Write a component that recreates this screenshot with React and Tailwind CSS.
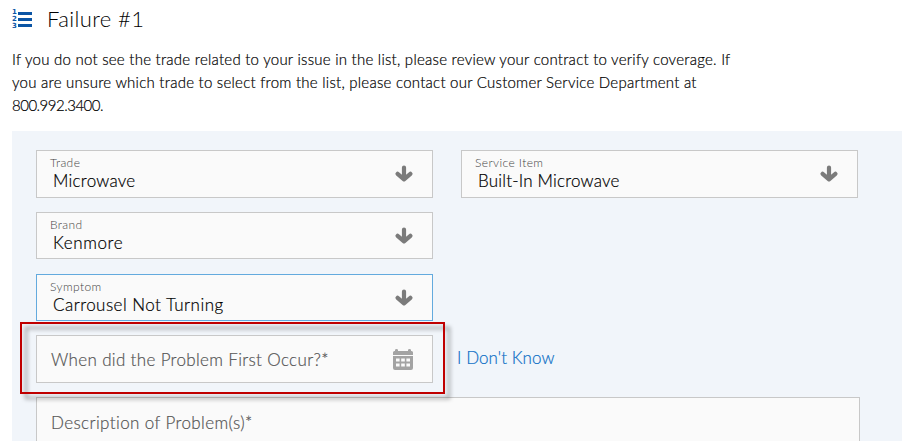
function DownArrow() {
  return (
    <svg width="18" height="18" viewBox="0 0 18 18" className="shrink-0" fill="none" stroke="#7b7b7b" strokeWidth="4.2" strokeLinecap="round" strokeLinejoin="round">
      <path d="M9 2.5v10M2.6 8.8 9 14.4l6.4-5.6" />
    </svg>
  );
}

function CalendarIcon() {
  return (
    <svg width="20" height="21" viewBox="0 0 20 21" className="shrink-0">
      <path fill="#a3a3a3" d="M0 3.5Q0 2 1.5 2H2V1.3Q2 0 3.5 0T5 1.3V2H15V1.3Q15 0 16.5 0T18 1.3V2h.5Q20 2 20 3.5V6H0zM0 7h20v12q0 2-2 2H2q-2 0-2-2z" />
      <path fill="#fafafa" d="M3 9.5h3.6v3H3zM8.2 9.5h3.6v3H8.2zM13.4 9.5h3.6v3h-3.6zM3 14.5h3.6v3H3zM8.2 14.5h3.6v3H8.2zM13.4 14.5h3.6v3h-3.6z" />
    </svg>
  );
}

function NumberedListIcon() {
  return (
    <div className="flex h-[21px] w-[20px] shrink-0 justify-between font-['DejaVu_Sans',sans-serif] text-[7px] leading-[7px] font-bold text-[#0b55a5]">
      <div className="flex flex-col">
        <span>1</span>
        <span>2</span>
        <span>3</span>
      </div>
      <div className="flex w-[14px] flex-col gap-[3px] pt-[3px]">
        <i className="h-[3px] bg-[#0b55a5]" />
        <i className="h-[3px] bg-[#0b55a5]" />
        <i className="h-[3px] bg-[#0b55a5]" />
      </div>
    </div>
  );
}

function SelectField({ label, value, tracking, className }) {
  return (
    <div className={`flex w-[397px] items-center justify-between border bg-[#fafafa] pl-[13px] pr-[19px] ${className}`}>
      <div className="flex h-full flex-col pt-[4px]">
        <span className="text-[12px] leading-[15px] tracking-[0.4px] text-[#444]">{label}</span>
        <span className={`pt-px pl-[3px] text-[17px] leading-[20px] text-black [-webkit-text-stroke:0.2px_#000] ${tracking}`}>{value}</span>
      </div>
      <DownArrow />
    </div>
  );
}

export default function App() {
  return (
    <div className="h-[441px] w-[902px] overflow-hidden bg-white pl-[12px] font-[Lato,'Open_Sans',sans-serif] font-light whitespace-nowrap">
      <header className="flex h-[38px] items-center gap-[15px]">
        <NumberedListIcon />
        <h1 className="text-[22px] leading-[30px] font-light tracking-[0.4px] text-black">Failure #1</h1>
      </header>
      <p className="flex h-[93px] flex-col items-start pt-[10px] text-[15px] leading-[23px] text-black [-webkit-text-stroke:0.2px_#000]">
        <span className="tracking-[0.25px]">If you do not see the trade related to your issue in the list, please review your contract to verify coverage. If</span>
        <span className="tracking-[0.25px]">you are unsure which trade to select from the list, please contact our Customer Service Department at</span>
        <span className="tracking-[-0.5px]">800.992.3400.</span>
      </p>
      <main className="h-[310px] bg-[#f1f5fa] pt-[19px] pl-[24px]">
        <div className="flex gap-[28px]">
          <SelectField label="Trade" value="Microwave" tracking="tracking-[0.25px]" className="h-[48px] border-[#c8c8c8]" />
          <SelectField label="Service Item" value="Built-In Microwave" tracking="tracking-[0.2px]" className="h-[48px] border-[#c8c8c8]" />
        </div>
        <SelectField label="Brand" value="Kenmore" tracking="tracking-[0.6px]" className="mt-[14px] h-[47px] border-[#c8c8c8]" />
        <SelectField label="Symptom" value="Carrousel Not Turning" tracking="tracking-[0.47px]" className="mt-[15px] h-[47px] border-[#63aade]" />
        <div className="relative mt-[14px] flex h-[48px] items-center">
          <div className="flex h-[48px] w-[397px] items-center justify-between border border-[#c8c8c8] bg-[#fafafa] pr-[19px] pl-[14px]">
            <span className="pt-px text-[17px] tracking-[0.34px] text-[#555] [-webkit-text-stroke:0.2px_#555]">When did the Problem First Occur?*</span>
            <CalendarIcon />
          </div>
          <a className="mb-[3px] ml-[24px] text-[17px] tracking-[0.05px] text-[#0f70c6] [-webkit-text-stroke:0.2px_#0f70c6]">I Don't Know</a>
          <div className="pointer-events-none absolute top-[-13px] left-[-16px] z-10 h-[72px] w-[425px] border-2 border-[#c00000] drop-shadow-[5px_5px_2px_rgba(0,0,0,0.4)]" />
        </div>
        <div className="mt-[14px] h-[60px] w-[824px] border border-[#c8c8c8] bg-[#fafafa] pt-[13px] pl-[14px] text-[17px] leading-[24px] tracking-[0.4px] text-[#555] [-webkit-text-stroke:0.2px_#555]">
          <span>Description of Problem(s)*</span>
        </div>
      </main>
    </div>
  );
}
